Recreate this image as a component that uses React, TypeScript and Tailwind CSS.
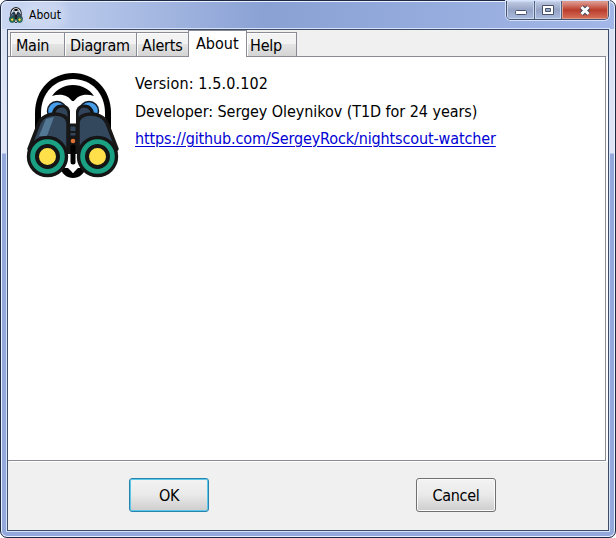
import type { ReactNode } from 'react';

function Binoculars({ className }: { className: string }) {
  return (
    <svg className={className} viewBox="0 0 94 108" fill="none">
      <path d="M9 58V42C9 18 26 2 47 2s38 16 38 40v16Z" fill="#000" />
      <path d="M15 58V42C15 22 29 8 47 8s32 14 32 34v16Z" fill="#fff" />
      <path d="M26 25C31 18 38 14 47 14s16 4 21 11c-9-3-16-1-21 6-5-7-12-9-21-6Z" fill="#000" />
      <path d="M39 51h16v32H39Z" fill="#151515" />
      <circle cx="31" cy="40" r="9.5" fill="#479eea" stroke="#121923" strokeWidth="1.5" />
      <circle cx="63" cy="40" r="9.5" fill="#479eea" stroke="#121923" strokeWidth="1.5" />
      <path d="M27 47c0-8 3-12 9-12 5 0 7 4 7 9v8H27ZM67 47c0-8-3-12-9-12-5 0-7 4-7 9v8h16Z" fill="#32445a" stroke="#151515" strokeWidth="3" />
      <path d="M44 30h6v23h-6Z" fill="#fff" />
      <path d="M43 54h8v12h-8Z" fill="#33475d" stroke="#171717" strokeWidth="3" />
      <path d="M43 61h8" stroke="#171717" strokeWidth="2" />
      <path d="M3 78 13 52c5-12 29-12 29 0v31H10Z" fill="#33475d" stroke="#171717" strokeWidth="3.5" strokeLinejoin="round" />
      <path d="M91 78 81 52c-5-12-29-12-29 0v31h32Z" fill="#33475d" stroke="#171717" strokeWidth="3.5" strokeLinejoin="round" />
      <path d="m20 48 8-2-7 19h-8Z" fill="#527894" />
      <path d="M34 97h26c-2 6-7 10-13 10s-11-4-13-10Z" fill="#000" />
      <path d="M42 83h10v11l-5 8-5-8Z" fill="#fff" />
      <path d="m47 102-5-5c-1-3 3-6 5-2 2-4 6-1 5 2Z" fill="#fff" />
      <path d="M47 76v15" stroke="#000" strokeWidth="5" strokeLinecap="round" />
      <circle cx="47" cy="70" r="2.3" fill="#de7131" />
      <g stroke="#151515">
        <circle cx="21.5" cy="85.5" r="19" strokeWidth="3.4" fill="#1aa184" />
        <circle cx="71.5" cy="85.5" r="19" strokeWidth="3.4" fill="#1aa184" />
        <circle cx="21.5" cy="85.5" r="10.5" strokeWidth="4" fill="#ffe04b" />
        <circle cx="71.5" cy="85.5" r="10.5" strokeWidth="4" fill="#ffe04b" />
      </g>
    </svg>
  );
}

function Tab({ children, className }: { children: ReactNode; className: string }) {
  return (
    <div className={`h-6 border border-b-0 border-[#898c95] bg-linear-to-b from-[#f3f3f3] from-50% via-[#e4e4e4] via-50% to-[#d4d4d4] leading-[25px] shadow-[inset_1px_1px_0_#fff] ${className}`}>
      {children}
    </div>
  );
}

function Button({ children, className }: { children: ReactNode; className: string }) {
  return (
    <button className={`h-[34px] w-20 rounded-[3px] border bg-linear-to-b from-[#f3f3f3] from-0% via-[#eaeaea] via-48% to-[#cdcdcd] leading-[33px] tracking-[-0.3px] ${className}`}>
      {children}
    </button>
  );
}

export default function App() {
  return (
    <div className="h-[538px] w-[616px] overflow-hidden bg-white font-['DejaVu_Sans_Condensed','DejaVu_Sans',sans-serif] text-[16px] text-black [font-stretch:condensed]">
      <div className="flex h-full flex-col rounded-[7px] border border-[#1d2944] bg-linear-to-b from-[#d9e1f3] from-0% via-[#dfe5f6] via-[152px] to-[#93a9db] to-[153px] shadow-[inset_0_0_0_1px_#e9f1ff]">
        <header className="mx-px flex h-7 shrink-0 justify-between rounded-t-[6px] border-t border-[#e9f1ff] bg-linear-to-r from-[#cad7f3] from-0% via-[#8aa1d4] via-[43%] to-[#a2b7e7]">
          <div className="flex pl-[6px] pt-[5px]">
            <Binoculars className="h-4 w-4" />
            <span className="ml-[5px] h-4 rounded-full bg-white/20 text-[12px] leading-[17px] shadow-[0_0_8px_6px_rgba(255,255,255,.22)]">About</span>
          </div>
          <div className="-mt-px mr-[5px] flex h-[19px] w-[103px] overflow-hidden rounded-b-[5px] border border-t-0 border-[#45536f] shadow-[0_0_0_1px_#d6e2fc]">
            <div className="flex w-7 items-center justify-center border-r border-[#53617f] bg-linear-to-b from-[#c3cde3] from-0% via-[#95a3c5] via-50% to-[#a9bcde] pt-1 shadow-[inset_0_0_0_1px_#c9d7ef]">
              <svg width="12" height="5"><rect x=".5" y=".5" width="11" height="4" rx="1" fill="#fff" stroke="#49536a" /></svg>
            </div>
            <div className="flex w-[27px] items-center justify-center border-r border-[#53617f] bg-linear-to-b from-[#c3cde3] from-0% via-[#95a3c5] via-50% to-[#a9bcde] shadow-[inset_0_0_0_1px_#c9d7ef]">
              <svg width="12" height="10"><path d="M.5.5h11v9H.5Z" fill="#fff" stroke="#49536a" /><path d="M3.5 3.5h5v3h-5Z" fill="#9aabc9" stroke="#49536a" /></svg>
            </div>
            <div className="flex flex-1 items-center justify-center bg-linear-to-b from-[#dfa098] from-0% via-[#ba3c2b] via-50% to-[#d6735c] shadow-[inset_0_0_0_1px_#df9a8a]">
              <svg width="13" height="11"><path d="m2.5 2 7 7m0-7-7 7" stroke="#45485d" strokeWidth="5" /><path d="m2.5 2 7 7m0-7-7 7" stroke="#fff" strokeWidth="3" /></svg>
            </div>
          </div>
        </header>

        <main className="mx-[6px] mb-[6px] flex min-h-0 flex-1 flex-col border border-[#3f4d68] bg-[#f0f0f0] shadow-[0_0_0_1px_#d4e2fb]">
          <nav className="flex h-[26px] shrink-0 items-end pl-[2px]">
            <Tab className="w-[55px] pl-[5px] tracking-[-0.3px]">Main</Tab>
            <Tab className="-ml-px w-[73px] pl-[5px] tracking-[-0.3px]">Diagram</Tab>
            <Tab className="-ml-px w-[53px] pl-[5px] tracking-[-0.2px]">Alerts</Tab>
            <div className="z-10 -mb-px -ml-px h-[27px] w-[59px] border border-b-0 border-[#898c95] bg-white pl-[7px] leading-[26px]">About</div>
            <Tab className="-ml-px w-[51px] pl-[3px] tracking-[-0.2px]">Help</Tab>
          </nav>
          <section className="mr-[2px] flex h-[405px] shrink-0 border border-l-0 border-[#898c95] bg-white shadow-[2px_1px_0_#fff]">
            <Binoculars className="ml-[18px] mt-[14px] h-[108px] w-[94px]" />
            <div className="ml-[15px] pt-[13px] leading-[27px]">
              <p className="h-7 tracking-[0.12px]">Version: 1.5.0.102</p>
              <p className="h-[27px] tracking-[-0.06px]">Developer: Sergey Oleynikov (T1D for 24 years)</p>
              <a className="whitespace-nowrap tracking-[-0.12px] text-[#0000d4] underline decoration-1 underline-offset-2">https://github.com/SergeyRock/nightscout-watcher</a>
            </div>
          </section>
          <footer className="flex pl-[121px] pt-[17px]">
            <Button className="border-[#2984ad] shadow-[inset_0_0_0_1px_#5bc8e9]">OK</Button>
            <Button className="ml-[207px] border-[#707070] shadow-[inset_0_0_0_1px_#fafafa]">Cancel</Button>
          </footer>
        </main>
      </div>
    </div>
  );
}
